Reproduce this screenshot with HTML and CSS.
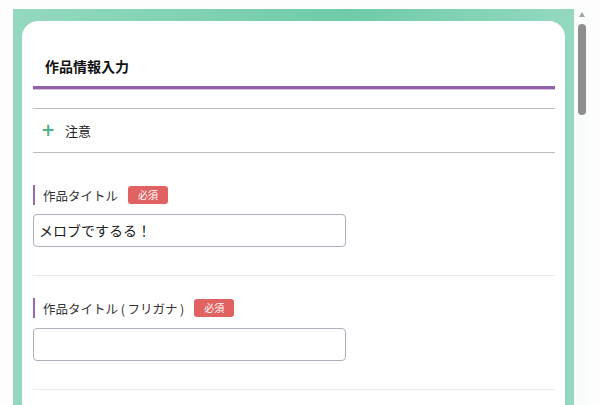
FILE: index.html
```html
<!DOCTYPE html>
<html lang="ja">
<head>
<meta charset="utf-8">
<link rel="stylesheet" href="styles.css">
</head>
<body>
<div class="page">
  <div class="frame">
    <div class="card">
      <h1 class="title">作品情報入力</h1>
      <div class="title-rule"></div>
      <div class="notice">
        <span class="plus">+</span>
        <span class="notice-text">注意</span>
      </div>
      <div class="field first">
        <div class="label"><span class="label-text">作品タイトル</span><span class="badge">必須</span></div>
        <div class="input">メロブでするる！</div>
      </div>
      <div class="field">
        <div class="label"><span class="label-text">作品タイトル (&thinsp;フリガナ&thinsp;)</span><span class="badge">必須</span></div>
        <div class="input"></div>
      </div>
    </div>
  </div>
  <div class="scrollbar">
    <div class="arrow"></div>
    <div class="thumb"></div>
  </div>
</div>
</body>
</html>
```
FILE: styles.css
```css
html, body {
  margin: 0;
  padding: 0;
  background: #fdfdfd;
  height: 405px;
  overflow: hidden;
}
body {
  font-family: "Noto Sans CJK JP", "Noto Sans", sans-serif;
  color: #222;
}
.page {
  display: flex;
  padding: 9px 11px 0 13px;
  height: 396px;
}
.frame {
  flex: 1;
  background: linear-gradient(90deg, #94d9bf 0%, #78cfad 45%, #6fcba8 60%, #94d9c0 100%);
  padding: 12px 9px 0 9px;
  display: flex;
}
.card {
  flex: 1;
  background: #fff;
  border-radius: 16px 16px 0 0;
  padding: 0 10px 0 11px;
}
.title {
  margin: 0;
  padding: 36px 0 0 12px;
  height: 29px;
  font-size: 14px;
  font-weight: bold;
  line-height: 18px;
  color: #111;
}
.title-rule {
  height: 3px;
  background: #9262a8;
  border-bottom: 1px solid #d4bfe0;
}
.notice {
  margin-top: 18px;
  border-top: 1px solid #bdbdbd;
  border-bottom: 1px solid #bdbdbd;
  height: 43px;
  display: flex;
  align-items: center;
  padding-left: 8px;
  font-size: 13px;
}
.plus {
  color: #4eb48c;
  font-size: 17px;
  font-weight: bold;
  width: 22px;
  line-height: 1;
  font-family: "DejaVu Sans", sans-serif;
}
.notice-text {
  color: #222;
  margin-left: 2px;
}
.field {
  padding-top: 22px;
  padding-bottom: 28px;
  border-bottom: 1px solid #ebebeb;
}
.field.first {
  padding-top: 32px;
}
.label {
  display: flex;
  align-items: center;
  height: 20px;
  border-left: 2px solid #9a6aa8;
  padding-left: 8px;
  font-size: 12.5px;
  color: #333;
}
.badge {
  margin-left: 10px;
  background: #e06262;
  color: #fff;
  font-size: 10px;
  border-radius: 3px;
  height: 18px;
  line-height: 18px;
  padding: 0 10px;
}
.input {
  margin-top: 9px;
  width: 306px;
  height: 31px;
  border: 1px solid #b4acbc;
  border-radius: 4px;
  font-size: 14px;
  line-height: 31px;
  padding-left: 5px;
  box-sizing: content-box;
  color: #222;
}
.field + .field .input {
  margin-top: 10px;
}
.scrollbar {
  width: 15px;
  background: #fafbfb;
  display: flex;
  flex-direction: column;
  align-items: center;
}
.arrow {
  margin-top: 3px;
  width: 0;
  height: 0;
  border-left: 3.5px solid transparent;
  border-right: 3.5px solid transparent;
  border-bottom: 5px solid #a3a3a3;
}
.thumb {
  margin-top: 7px;
  width: 8px;
  height: 91px;
  background: #8e8e8e;
  border-radius: 4px;
}
```
